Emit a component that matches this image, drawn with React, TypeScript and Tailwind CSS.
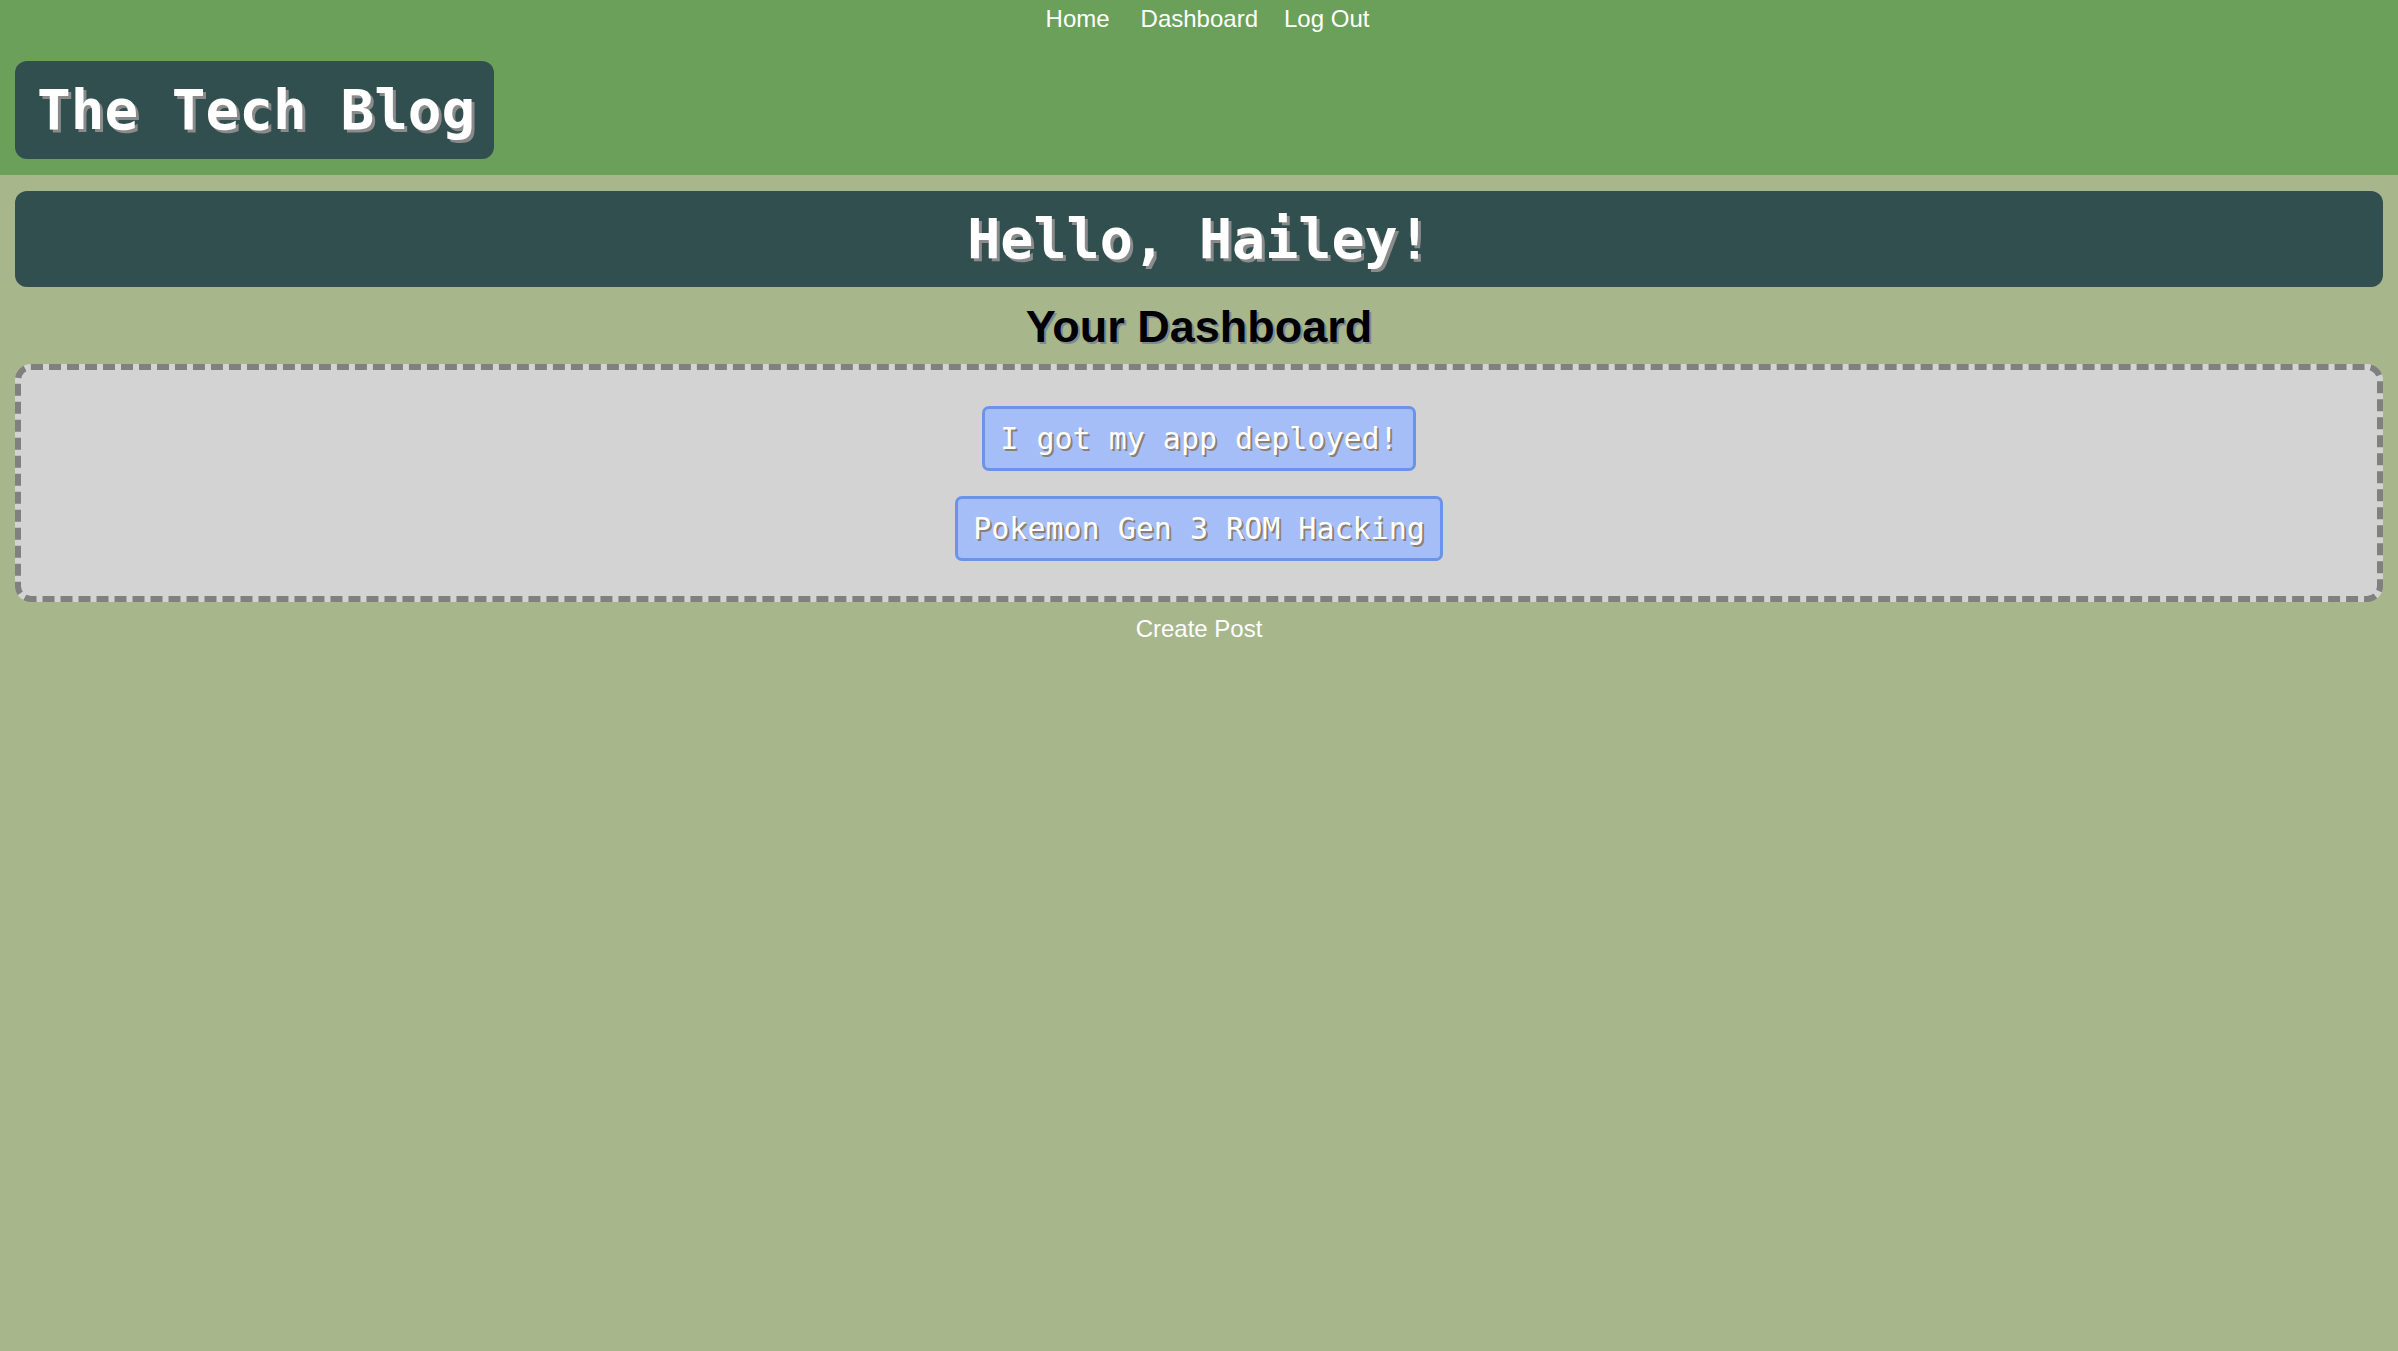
import React from "react";

const posts = ["I got my app deployed!", "Pokemon Gen 3 ROM Hacking"];

export default function App() {
  return (
    <div className="min-h-screen bg-[#a7b78b] font-['Liberation_Sans',Arial,sans-serif]">
      <header className="bg-[#6ba05b] pb-[16px]">
        <nav className="flex justify-center pl-[17px] pt-[5px] text-[24px] leading-[28px] text-white">
          <a className="mr-[31px]" href="#">Home</a>
          <a href="#">Dashboard</a>
          <a className="ml-[26px]" href="#">Log Out</a>
        </nav>
        <div className="mt-[28px] ml-[15px] flex h-[98px] w-[479px] items-center rounded-[12px] bg-[#324f4f] pl-[22px]">
          <h1 className="font-['DejaVu_Sans_Mono',monospace] text-[56px] font-bold leading-[64px] text-white [text-shadow:3px_3px_#8a8a8a]">
            The Tech Blog
          </h1>
        </div>
      </header>
      <main>
        <div className="mx-[15px] mt-[16px] flex h-[96px] items-center justify-center rounded-[12px] bg-[#324f4f]">
          <h2 className="font-['DejaVu_Sans_Mono',monospace] text-[55px] font-bold leading-[64px] text-white [text-shadow:3px_3px_#8a8a8a]">
            Hello, Hailey!
          </h2>
        </div>
        <h3 className="mt-[15px] h-[50px] text-center text-[45px] font-bold leading-[50px] text-black [text-shadow:2px_2px_#7d8a96]">
          Your Dashboard
        </h3>
        <div className="mx-[15px] mt-[12px] flex h-[238px] flex-col items-center gap-[25px] rounded-[16px] border-[6px] border-dashed border-[#808080] bg-[#d3d3d3] pt-[36px]">
          {posts.map((p) => (
            <div
              key={p}
              className="flex h-[65px] items-center rounded-[7px] border-[3px] border-[#6b93ea] bg-[#a6bef7] px-[15px] font-['DejaVu_Sans_Mono',monospace] text-[30px] leading-[36px] text-white [text-shadow:2px_2px_#8c7f74]"
            >
              {p}
            </div>
          ))}
        </div>
        <div className="mt-[13px] text-center text-[24px] leading-[28px] text-white">
          <a href="#">Create Post</a>
        </div>
      </main>
    </div>
  );
}
